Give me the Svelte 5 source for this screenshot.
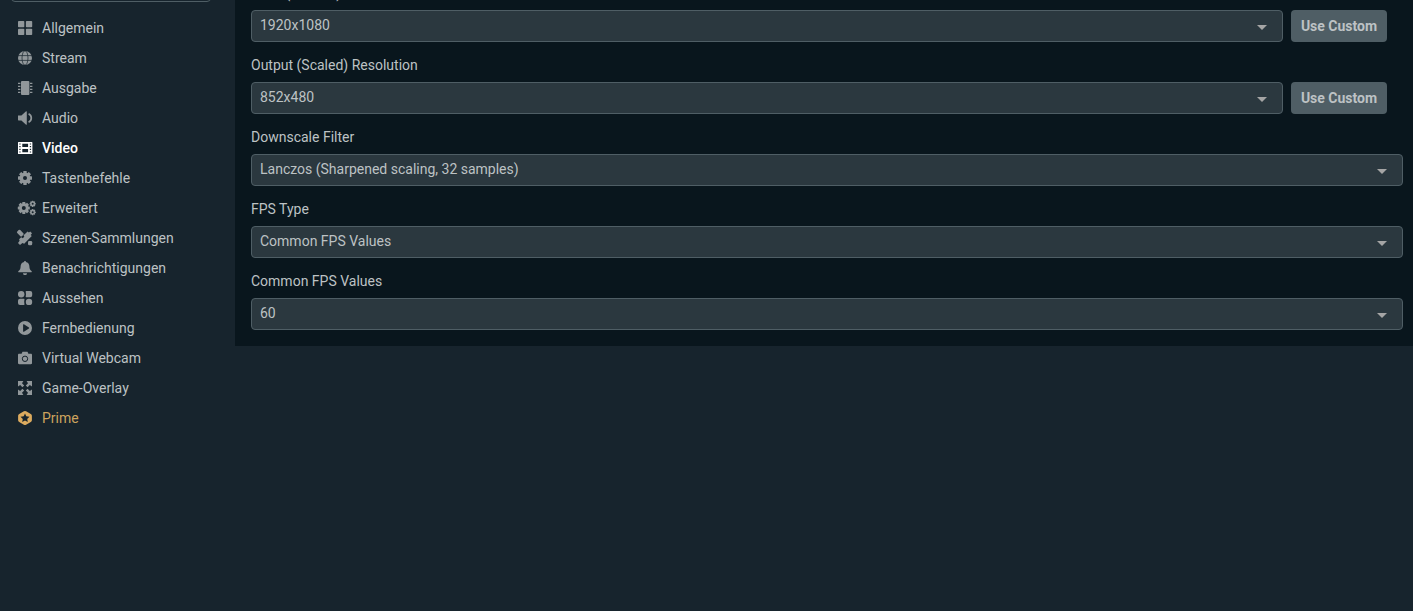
<script>
	const navItems = [
		{ id: 'general', title: 'Allgemein' },
		{ id: 'stream', title: 'Stream' },
		{ id: 'output', title: 'Ausgabe' },
		{ id: 'audio', title: 'Audio' },
		{ id: 'video', title: 'Video' },
		{ id: 'hotkeys', title: 'Tastenbefehle' },
		{ id: 'advanced', title: 'Erweitert' },
		{ id: 'scenes', title: 'Szenen-Sammlungen' },
		{ id: 'notifications', title: 'Benachrichtigungen' },
		{ id: 'appearance', title: 'Aussehen' },
		{ id: 'remote', title: 'Fernbedienung' },
		{ id: 'webcam', title: 'Virtual Webcam' },
		{ id: 'overlay', title: 'Game-Overlay' },
		{ id: 'prime', title: 'Prime' }
	];

	const fields = [
		{ id: 'base', label: 'Base (Canvas) Resolution', options: ['1920x1080', '1280x720'], custom: true },
		{ id: 'scaled', label: 'Output (Scaled) Resolution', options: ['852x480', '1280x720', '1920x1080'], custom: true },
		{ id: 'filter', label: 'Downscale Filter', options: ['Lanczos (Sharpened scaling, 32 samples)'] },
		{ id: 'fps-type', label: 'FPS Type', options: ['Common FPS Values'] },
		{ id: 'fps', label: 'Common FPS Values', options: ['60', '30'] }
	];

	let active = $state('video');
	let search = $state('');

	function select(event, id) {
		event.preventDefault();
		active = id;
	}
</script>

<!-- an eight-toothed gear centred on cx, cy -->
{#snippet gear(cx, cy, r, tooth, hole)}
	<g transform="translate({cx} {cy})">
		{#each [0, 45, 90, 135] as angle}
			<rect x={-tooth / 2} y={-r} width={tooth} height={r * 2} rx="0.5" transform="rotate({angle})" />
		{/each}
		<circle r={r * 0.78} />
		<circle class="hole" r={hole} />
	</g>
{/snippet}

{#snippet icon(id)}
	<svg class="icon" viewBox="0 0 14 14" aria-hidden="true">
		{#if id === 'general'}
			<rect width="6.3" height="6.3" rx="0.8" />
			<rect x="7.9" width="6.3" height="6.3" rx="0.8" />
			<rect y="7.8" width="6.3" height="6.3" rx="0.8" />
			<rect x="7.9" y="7.8" width="6.3" height="6.3" rx="0.8" />
		{:else if id === 'stream'}
			<circle cx="7" cy="7" r="7" />
			<g class="cut" stroke-width="0.7">
				<ellipse cx="7" cy="7" rx="3" ry="7.2" />
				<path d="M0 4.6h14M0 9.4h14" />
			</g>
		{:else if id === 'output'}
			<rect x="3" width="8.4" height="14" rx="1" />
			<path d="M0 1.8h2.4v1.2H0zM0 4.8h2.4V6H0zM0 7.8h2.4V9H0zM0 10.8h2.4V12H0zM12 1.8h2.4v1.2H12zM12 4.8h2.4V6H12zM12 7.8h2.4V9H12zM12 10.8h2.4V12H12z" />
		{:else if id === 'audio'}
			<path d="M0 4.6h3.4L7.800.4c.5-.4 1-.2 1 .4v12.400c0 .6-.5.8-1 .4L3.400 9.400H.6A.6.6 0 0 1 0 8.800z" />
			<path class="line" d="M10.600 2.800c3.600 1.800 3.600 6.600 0 8.400" stroke-width="1.700" />
		{:else if id === 'video'}
			<path fill-rule="evenodd" d="M.6 1h13.200c.4 0 .6.2.6.6v10.800c0 .4-.2.6-.6.6H.6c-.4 0-.6-.2-.6-.6V1.600C0 1.200.2 1 .6 1zM4.300 2.700v3.400h5.800V2.700zM4.300 7.900v3.400h5.800V7.900zM1.300 2.400v1.200h1.300V2.400zM1.300 5.100v1.200h1.300V5.100zM1.300 7.800V9h1.300V7.800zM1.300 10.400v1.200h1.300v-1.200zM11.800 2.400v1.200h1.300V2.400zM11.800 5.100v1.200h1.300V5.100zM11.800 7.800V9h1.300V7.800zM11.800 10.400v1.200h1.300v-1.200z" />
		{:else if id === 'hotkeys'}
			{@render gear(7, 7, 7, 3.4, 2)}
		{:else if id === 'advanced'}
			{@render gear(5.8, 7, 6, 3, 2)}
			{@render gear(14.7, 2.8, 3.1, 1.6, 1)}
			{@render gear(14.7, 11.2, 3.1, 1.6, 1)}
		{:else if id === 'scenes'}
			<rect x="-1" y="0" width="6.600" height="4.200" rx="1.100" transform="rotate(45 2.300 2.100)" />
			<path d="M9.600.5 10.900 1.600 12.200.5 14 2.300 12.700 4 13.800 5.100 6.200 12.800 4.400 12 2 14 0 12.100 1.600 9.700 1.100 8.300 3.200 6.200 4.700 7.300 6.300 5.700 5.600 4.200z" />
			<rect x="10" y="10" width="4.200" height="4.200" rx="1.300" />
		{:else if id === 'notifications'}
			<path d="M6.200 0h1.600v1c2.400.4 3.600 2.300 3.600 4.500 0 2.500.7 3.500 2.100 4.500.6.500.3 1.300-.4 1.300H.9c-.7 0-1-.8-.4-1.300 1.400-1 2.100-2 2.100-4.500C2.600 3.300 3.800 1.400 6.200 1z" />
			<path d="M5 12.200h4c0 1.200-.8 1.900-2 1.900s-2-.7-2-1.900z" />
		{:else if id === 'appearance'}
			<circle cx="3.200" cy="3.200" r="3.200" />
			<path d="M8.200 0h4a2 2 0 0 1 2 2v2.300a2 2 0 0 1-2 2h-4C7.200 6.300 8 5 8 3.200S7.200 0 8.200 0z" />
			<path d="M2 7.700h4c1 0 .2 1.300.2 3.100s.8 3.200-.2 3.200H2a2 2 0 0 1-2-2V9.700a2 2 0 0 1 2-2z" />
			<circle cx="11" cy="10.900" r="3.200" />
		{:else if id === 'remote'}
			<path fill-rule="evenodd" d="M7 0a7 7 0 1 1 0 14A7 7 0 0 1 7 0zM5.100 3.700v6.600c0 .5.400.7.800.4l5-3.200c.4-.2.4-.8 0-1l-5-3.200c-.4-.3-.8-.1-.8.4z" />
		{:else if id === 'webcam'}
			<path d="M4.500.8h5l.9 2h2.400c.8 0 1.200.4 1.200 1.200v8c0 .8-.4 1.200-1.200 1.200H1.200C.4 13.200 0 12.800 0 12V4c0-.8.4-1.200 1.200-1.200h2.400z" />
			<circle class="cut" cx="7" cy="7.800" r="2.700" stroke-width="1" />
		{:else if id === 'overlay'}
			<path d="M0 0h5.400L4 2.200l2.200 2.200-1.800 1.800L2.200 4 0 5.400z" />
			<path d="M14 0H8.600L10 2.200 7.800 4.400l1.800 1.800L11.800 4 14 5.400z" />
			<path d="M0 14h5.400L4 11.800l2.200-2.200-1.800-1.800L2.200 10 0 8.600z" />
			<path d="M14 14H8.600l1.400-2.200-2.200-2.200 1.800-1.800 2.200 2.200L14 8.600z" />
		{:else}
			<path fill-rule="evenodd" d="M5.900.3a2.200 2.200 0 0 1 2.200 0l4.700 2.600c.7.400 1.100 1 1.100 1.800v4.600c0 .8-.4 1.400-1.100 1.800l-4.700 2.600a2.200 2.200 0 0 1-2.200 0L1.200 11.100C.5 10.700.1 10.100.1 9.300V4.700c0-.8.4-1.400 1.100-1.800zM7 2.500 5.700 5.300 2.500 5.700 4.800 7.900l-.6 3.200L7 9.500l2.800 1.600-.6-3.200 2.300-2.200-3.200-.4z" />
		{/if}
	</svg>
{/snippet}

<div class="settings">
	<aside class="sidebar">
		<input class="search" type="search" aria-label="Suchen" bind:value={search} />
		<nav>
			{#each navItems as item}
				<a
					class="nav-item"
					class:active={active === item.id}
					class:prime={item.id === 'prime'}
					href="#{item.id}"
					onclick={(e) => select(e, item.id)}
				>
					{@render icon(item.id)}
					{item.title}
				</a>
			{/each}
		</nav>
	</aside>

	<main class="panel">
		{#each fields as field}
			<div class="field">
				<label for={field.id}>{field.label}</label>
				<div class="row" class:with-button={field.custom}>
					<div class="select">
						<select id={field.id}>
							{#each field.options as option}
								<option>{option}</option>
							{/each}
						</select>
					</div>
					{#if field.custom}
						<button type="button">Use Custom</button>
					{/if}
				</div>
			</div>
		{/each}
	</main>
</div>

<style>
	:global(body) {
		background: #17242d;
		color: #bdc2c4;
		font-family: Roboto, sans-serif;
		font-size: 14px;
		line-height: 20px;
	}

	/* the page rests scrolled just past the search box */
	.settings {
		display: flex;
		align-items: flex-start;
		margin-top: -30px;
	}

	.sidebar {
		flex: 0 0 235px;
		box-sizing: border-box;
		padding: 0 24px 0 11px;
	}

	.search {
		display: block;
		box-sizing: border-box;
		width: 100%;
		height: 32px;
		margin-bottom: 11px;
		border: 1px solid #4f5e65;
		border-radius: 4px;
		background: transparent;
		color: inherit;
		font: inherit;
	}

	.nav-item {
		display: flex;
		align-items: center;
		gap: 10px;
		height: 30px;
		padding-left: 7px;
		color: inherit;
		text-decoration: none;
	}

	.nav-item.active {
		color: #fff;
		font-weight: 500;
	}

	.nav-item.prime {
		color: #cda35e;
	}

	.icon {
		flex: none;
		width: 14px;
		height: 14px;
		overflow: visible;
		fill: #91979a;
	}

	.active .icon {
		fill: currentColor;
	}

	.prime .icon {
		fill: #dcab5f;
	}

	.icon .hole {
		fill: #17242d;
	}

	.icon .cut {
		fill: none;
		stroke: #17242d;
	}

	.icon .line {
		fill: none;
		stroke: #91979a;
	}

	.panel {
		flex: 1;
		min-width: 0;
		padding: 13px 10px 16px 16px;
		background: #09161d;
	}

	.field + .field {
		margin-top: 13px;
	}

	label {
		display: block;
		margin-bottom: 7px;
	}

	.row {
		display: flex;
		gap: 8px;
	}

	.with-button {
		margin-right: 16px;
	}

	.select {
		position: relative;
		flex: 1;
	}

	.select::after {
		content: '';
		position: absolute;
		top: 15px;
		right: 16px;
		border: 5px solid transparent;
		border-top-color: #a5a5a5;
		border-bottom: 0;
		pointer-events: none;
	}

	select {
		display: block;
		box-sizing: border-box;
		width: 100%;
		height: 32px;
		padding: 0 32px 2px 8px;
		border: 1px solid #4f5e65;
		border-radius: 4px;
		appearance: none;
		background: #2b383f;
		color: inherit;
		font: inherit;
	}

	button {
		width: 96px;
		height: 32px;
		padding: 0;
		border: 0;
		border-radius: 4px;
		background: #4f5e65;
		color: #bdc2c4;
		font: inherit;
		font-weight: 700;
	}
</style>
